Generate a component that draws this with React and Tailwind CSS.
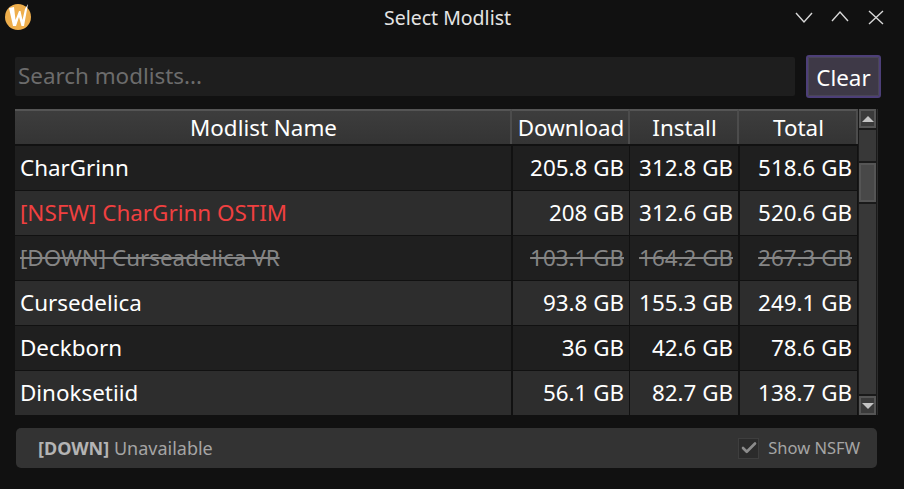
import React from 'react';
import { Check } from 'lucide-react';

const modlists = [
  { name: 'CharGrinn', download: '205.8 GB', install: '312.8 GB', total: '518.6 GB' },
  { name: '[NSFW] CharGrinn OSTIM', download: '208 GB', install: '312.6 GB', total: '520.6 GB', nsfw: true },
  { name: '[DOWN] Curseadelica VR', download: '103.1 GB', install: '164.2 GB', total: '267.3 GB', down: true },
  { name: 'Cursedelica', download: '93.8 GB', install: '155.3 GB', total: '249.1 GB' },
  { name: 'Deckborn', download: '36 GB', install: '42.6 GB', total: '78.6 GB' },
  { name: 'Dinoksetiid', download: '56.1 GB', install: '82.7 GB', total: '138.7 GB' },
];

const Logo = () => (
  <svg width="32" height="32" viewBox="0 0 32 32">
    <circle cx="18" cy="17" r="13" fill="#eeae4c" />
    <path
      d="M9 8 L14 7 L15.5 20 L19 11 L20.5 11 L22.5 20 L25 9 L28 4 L24 26 L21.5 26 L19 17 L16 26 L13 26 Z"
      fill="#ffffff"
    />
  </svg>
);

// window buttons, drawn on the same 904 wide coordinates as the title bar
const WindowButtons = () => (
  <svg width="100" height="32" viewBox="790 0 100 32" fill="none" stroke="#d8d8d8" strokeWidth="1.4" className="ml-auto mr-[14px]">
    <path d="M796 13 L804 22 L812 13" />
    <path d="M832 21 L840 12 L848 21" />
    <path d="M869 11 L883 24 M883 11 L869 24" />
  </svg>
);

const HeaderCell = ({ className, children }) => (
  <div className={`flex items-center justify-center border-t-2 border-t-[#555] border-r-2 border-r-[#4c4c4c] bg-gradient-to-b from-[#3d3d3d] to-[#343434] pl-[2px] ${className}`}>
    {children}
  </div>
);

const Row = ({ item, index }) => {
  const bg = index % 2 === 0 ? 'bg-[#1f1f1f]' : 'bg-[#2d2d2d]';
  const nameColor = item.nsfw ? 'text-[#f04040]' : '';
  const rowColor = item.down ? 'text-[#858585] line-through' : 'text-white';
  return (
    <div className={`flex h-[45px] border-b border-b-[#111] leading-[43px] ${rowColor}`}>
      <div className={`w-[496px] pl-[5px] ${bg} ${nameColor}`}>{item.name}</div>
      <div className={`ml-[2px] w-[116px] pr-[5px] text-right ${bg}`}>{item.download}</div>
      <div className={`ml-[1px] w-[108px] pr-[5px] text-right ${bg}`}>{item.install}</div>
      <div className={`ml-[2px] w-[117px] pr-[5px] text-right ${bg}`}>{item.total}</div>
    </div>
  );
};

const ScrollButton = ({ children }) => (
  <div className="flex h-[19px] items-center justify-center border-2 border-[#555] bg-[#3a3a3a]">{children}</div>
);

const Scrollbar = () => (
  <div className="flex h-full w-[20px] flex-col gap-[2px] border-r border-r-[#2c2c2c] bg-[#1a1a1a] pl-[1px] pr-[1px]">
    <ScrollButton>
      <div className="h-0 w-0 border-x-[6px] border-b-[6px] border-x-transparent border-b-[#c4c4c4]" />
    </ScrollButton>
    <div className="h-[31px] bg-[#383838]" />
    <div className="h-[39px] border-2 border-[#555] bg-[#484848]" />
    <div className="flex-1 bg-[#383838]" />
    <ScrollButton>
      <div className="h-0 w-0 border-x-[6px] border-t-[6px] border-x-transparent border-t-[#c4c4c4]" />
    </ScrollButton>
  </div>
);

export default function App() {
  return (
    <div className="flex h-[489px] w-[904px] flex-col overflow-hidden bg-[#111111] font-['Noto_Sans',sans-serif] text-[22.4px] text-white">
      {/* title bar */}
      <div className="relative flex h-[37px] items-start">
        <Logo />
        <div className="absolute inset-x-0 top-0 pr-[9px] text-center text-[19.5px] leading-[36px] text-[#e4e4e4]">Select Modlist</div>
        <WindowButtons />
      </div>

      {/* search */}
      <div className="ml-[15px] mt-[18px] flex h-[43px] items-center gap-[11px]">
        <div className="h-[39px] w-[780px] rounded-[2px] bg-[#1e1e1e] pl-[3px] leading-[38px] text-[#6c6c6c]">Search modlists...</div>
        <div className="h-[43px] w-[75px] rounded-[3px] border-2 border-[#4d3f78] bg-[#3e3947] text-center leading-[41px] shadow-[inset_0_0_0_1px_#4a4656]">Clear</div>
      </div>

      {/* table */}
      <div className="ml-[15px] mt-[11px] flex h-[306px] w-[864px]">
        <div className="w-[843px]">
          <div className="flex h-[37px] border-b-2 border-b-[#111] leading-[34px]">
            <HeaderCell className="w-[497px]">Modlist Name</HeaderCell>
            <HeaderCell className="w-[118px]">Download</HeaderCell>
            <HeaderCell className="w-[109px]">Install</HeaderCell>
            <HeaderCell className="w-[119px]">Total</HeaderCell>
          </div>
          {modlists.map((item, i) => <Row key={item.name} item={item} index={i} />)}
        </div>
        <Scrollbar />
      </div>

      {/* legend */}
      <div className="ml-[16px] mt-[13px] flex h-[40px] w-[861px] items-center rounded-[5px] bg-[#333333] pl-[22px] pr-[17px] text-[16.5px] text-[#a5a5a5]">
        <span className="text-[18px]"><b className="text-[#b4b4b4]">[DOWN]</b> Unavailable</span>
        <div className="ml-auto flex items-center gap-[9px]">
          <div className="flex h-[21px] w-[21px] items-center justify-center border border-[#3e3e3e] bg-[#2b2b2b]">
            <Check size={18} strokeWidth={3.5} className="text-[#8c8c8c]" />
          </div>
          <span>Show NSFW</span>
        </div>
      </div>
    </div>
  );
}
